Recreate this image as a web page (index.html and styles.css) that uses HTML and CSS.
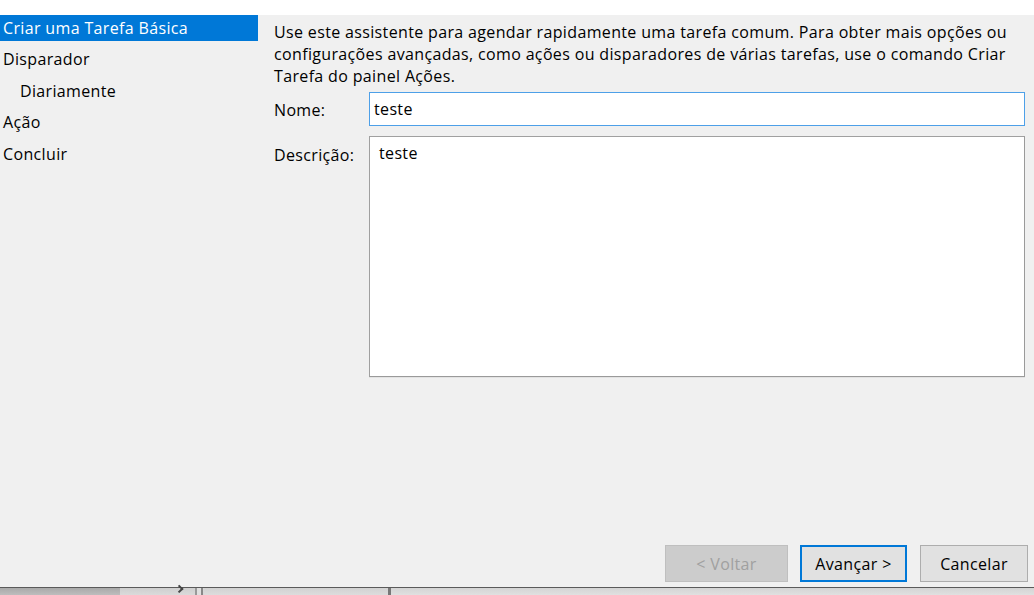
FILE: index.html
```html
<!DOCTYPE html>
<html lang="pt-BR">
<head>
<meta charset="utf-8">
<title>Criar uma Tarefa Básica</title>
<link rel="stylesheet" href="styles.css">
</head>
<body>
<div class="topstrip"></div>
<div class="dialog">
  <nav class="sidebar">
    <div class="step selected">Criar uma Tarefa Básica</div>
    <div class="step">Disparador</div>
    <div class="step sub">Diariamente</div>
    <div class="step">Ação</div>
    <div class="step">Concluir</div>
  </nav>
  <main class="content">
    <p class="intro">Use este assistente para agendar rapidamente uma tarefa comum. Para obter mais opções ou configurações avançadas, como ações ou disparadores de várias tarefas, use o comando Criar Tarefa do painel Ações.</p>
    <div class="row">
      <label class="lbl" for="nome">Nome:</label>
      <div class="input focused" id="nome">teste</div>
    </div>
    <div class="row desc-row">
      <label class="lbl desc-lbl" for="desc">Descrição:</label>
      <div class="textarea" id="desc">teste</div>
    </div>
    <div class="spacer"></div>
    <div class="buttons">
      <button class="btn disabled" type="button">&lt; Voltar</button>
      <button class="btn default" type="button">Avançar &gt;</button>
      <button class="btn" type="button">Cancelar</button>
    </div>
  </main>
</div>
<div class="taskbar">
  <div class="seg seg1"></div>
  <div class="seg seg2"><span class="chev"></span></div>
  <div class="sep"></div>
  <div class="seg seg3"></div>
  <div class="sep2"></div>
  <div class="seg seg4"></div>
</div>
</body>
</html>
```
FILE: styles.css
```css
* { box-sizing: border-box; }
html, body { margin: 0; padding: 0; }
body {
  width: 1034px;
  height: 595px;
  overflow: hidden;
  background: #ffffff;
  font-family: "Open Sans", "Noto Sans", sans-serif;
  font-size: 16px;
  letter-spacing: 0.35px;
  color: #000;
}
.topstrip { height: 15px; background: #ffffff; }
.dialog {
  display: flex;
  height: 573px;
  background: #f0f0f0;
  border-bottom: 1px solid #5a5a5a;
}
.sidebar {
  width: 258px;
  display: flex;
  flex-direction: column;
  gap: 5.4px;
}
.step {
  height: 26px;
  line-height: 26px;
  padding-left: 3px;
  white-space: nowrap;
  color: #000;
}
.step.selected { background: #0078d7; color: #fff; }
.step.sub { padding-left: 20px; }
.content {
  flex: 1;
  display: flex;
  flex-direction: column;
  padding: 6px 9px 5px 16px;
}
.intro {
  margin: 0;
  line-height: 22px;
  width: 745px;
}
.row { display: flex; align-items: center; margin-top: 5px; }
.lbl { width: 95px; flex: none; padding-top: 2px; }
.input {
  flex: 1;
  height: 34px;
  background: #fff;
  border: 1px solid #7a7a7a;
  padding: 0 0 0 4px;
  line-height: 32px;
}
.input.focused { border-color: #4da0e8; }
.desc-row { align-items: flex-start; margin-top: 10px; }
.desc-lbl { padding-top: 8px; }
.textarea {
  flex: 1;
  height: 241px;
  background: #fff;
  border: 1px solid #a0a0a0;
  border-right-color: #9a9a9a;
  border-bottom-color: #9a9a9a;
  box-shadow: 0 1px 0 #e3e3e3;
  padding: 5px 9px;
  line-height: 22px;
}
.spacer { flex: 1; }
.buttons {
  display: flex;
  justify-content: flex-end;
  margin-right: -3px;
}
.btn {
  font-family: inherit;
  font-size: 16px;
  letter-spacing: 0.35px;
  height: 37px;
  margin: 0;
  background: #e1e1e1;
  border: 1px solid #adadad;
  color: #000;
  padding: 0;
  width: 108px;
  margin-left: 13px;
}
.btn.disabled {
  width: 123px;
  background: #cccccc;
  border-color: #bfbfbf;
  color: #a0a0a0;
}
.btn.default {
  width: 107px;
  margin-left: 12px;
  border: 2px solid #0078d7;
}
.taskbar {
  display: flex;
  height: 7px;
}
.seg { height: 7px; }
.seg1 { width: 120px; background: linear-gradient(#a9a9a9, #bdbdbd); }
.seg2 { width: 75px; background: linear-gradient(#cfcfcf, #dadada); position: relative; }
.chev {
  position: absolute;
  left: 57px;
  top: 0;
  width: 6px;
  height: 6px;
  border-right: 2px solid #444;
  border-top: 2px solid #444;
  transform: rotate(45deg) translate(-2px, -1px);
}
.sep { width: 9px; background: linear-gradient(90deg, #999 0 2px, #e0e0e0 2px 6px, #888 6px 8px, #d8d8d8 8px); }
.seg3 { width: 184px; background: linear-gradient(#d2d2d2, #dcdcdc); }
.sep2 { width: 3px; background: #777; }
.seg4 { flex: 1; background: linear-gradient(#d4d4d4, #e0e0e0); }
```
